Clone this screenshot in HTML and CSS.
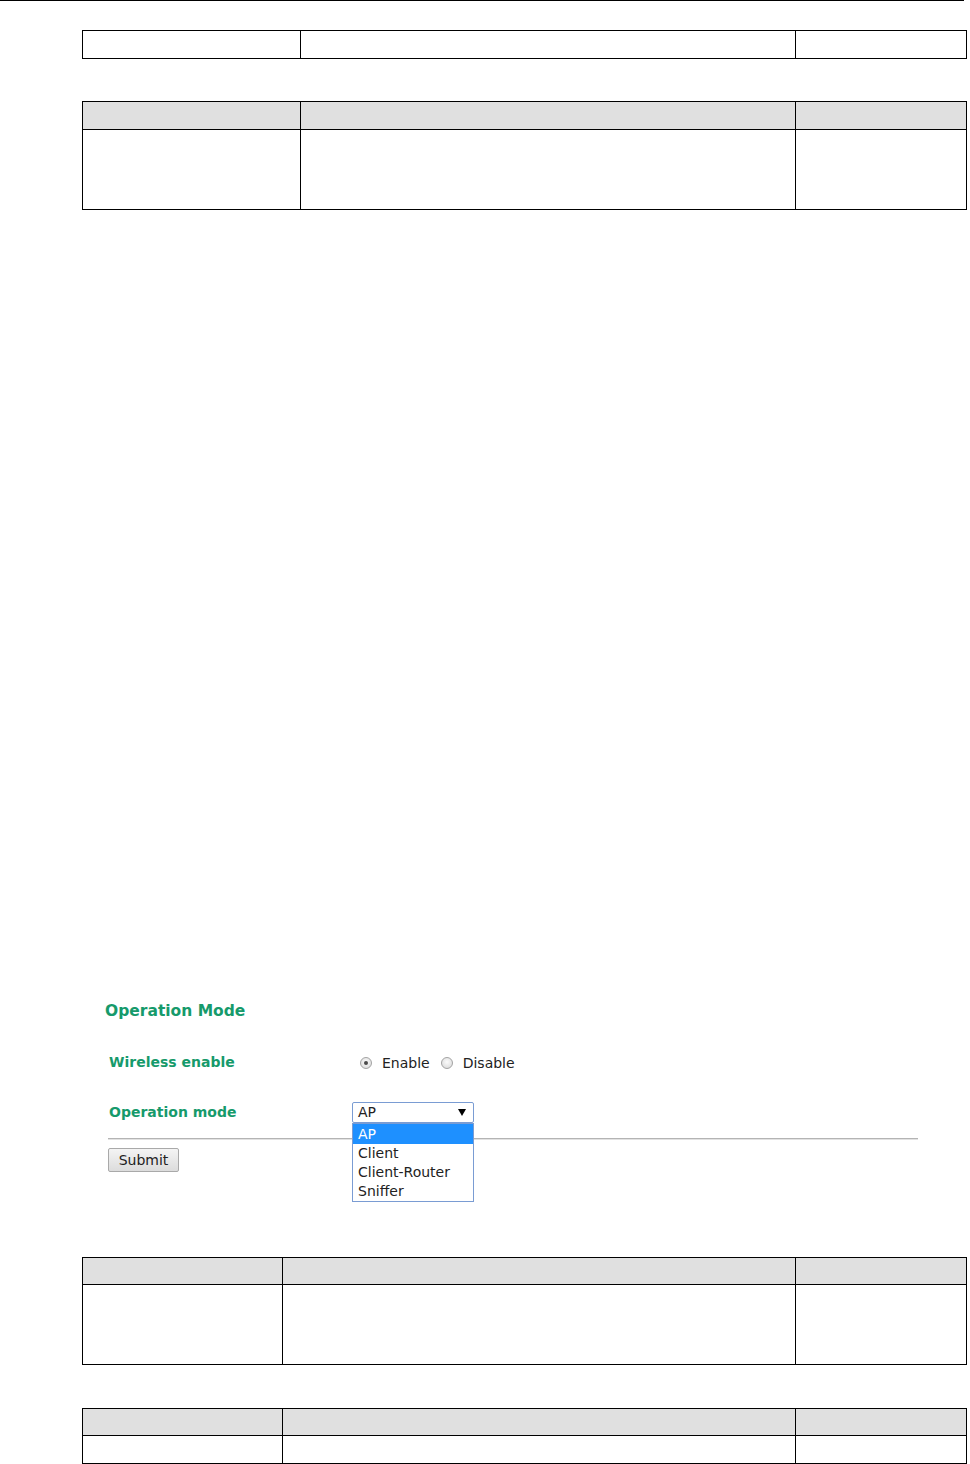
FILE: index.html
```html
<!DOCTYPE html>
<html>
<head>
    <title>Operation Mode</title>
    <link rel="stylesheet" href="styles.css">
</head>
<body>
    <div class="top-rule"></div>
    <div class="page">
        <div class="spec wide first">
            <div class="cell row-single"></div>
            <div class="cell row-single"></div>
            <div class="cell row-single"></div>
        </div>

        <div class="spec wide second">
            <div class="cell head"></div>
            <div class="cell head"></div>
            <div class="cell head"></div>
            <div class="cell row-tall"></div>
            <div class="cell row-tall"></div>
            <div class="cell row-tall"></div>
        </div>

        <!-- screenshot of the web console form -->
        <div class="shot">
            <h3 class="shot-title">Operation Mode</h3>
            <div class="field-row first-row">
                <div class="field-label">Wireless enable</div>
                <div class="field-value radios">
                    <span class="radio checked"></span>
                    <span class="radio-text">Enable</span>
                    <span class="radio"></span>
                    <span class="radio-text">Disable</span>
                </div>
            </div>
            <div class="field-row">
                <div class="field-label">Operation mode</div>
                <div class="field-value">
                    <div class="select">
                        <span class="select-text">AP</span>
                        <span class="select-arrow"></span>
                        <ul class="options">
                            <li class="selected">AP</li>
                            <li>Client</li>
                            <li>Client-Router</li>
                            <li>Sniffer</li>
                        </ul>
                    </div>
                </div>
            </div>
            <div class="divider"></div>
            <button class="submit" type="button">Submit</button>
        </div>

        <div class="spec narrow third">
            <div class="cell head"></div>
            <div class="cell head"></div>
            <div class="cell head"></div>
            <div class="cell row-tall"></div>
            <div class="cell row-tall"></div>
            <div class="cell row-tall"></div>
        </div>

        <div class="spec narrow fourth">
            <div class="cell head"></div>
            <div class="cell head"></div>
            <div class="cell head"></div>
            <div class="cell row-single"></div>
            <div class="cell row-single"></div>
            <div class="cell row-single"></div>
        </div>
    </div>
</body>
</html>
```

FILE: styles.css
```css
body {
    margin: 0;
    background: #fff;
    color: #222;
    font-family: "DejaVu Sans", Verdana, sans-serif;
    font-size: 14px;
}
.top-rule {
    width: 964px;
    height: 1px;
    background: #000;
}
.page {
    padding-left: 82px;
}

/* document tables */
.spec {
    display: grid;
    width: 884px;
    border-top: 1px solid #000;
    border-left: 1px solid #000;
}
.spec.wide {
    grid-template-columns: 218px 495px 171px;
}
.spec.narrow {
    grid-template-columns: 200px 513px 171px;
}
.cell {
    border-right: 1px solid #000;
    border-bottom: 1px solid #000;
}
.cell.head {
    height: 27px;
    background: #e0e0e0;
}
.cell.row-single {
    height: 27px;
}
.cell.row-tall {
    height: 79px;
}
.first {
    margin-top: 29px;
}
.second {
    margin-top: 42px;
}
.third {
    margin-top: 85px;
}
.third .cell.head {
    height: 26px;
}
.fourth {
    margin-top: 43px;
}
.fourth .cell.head {
    height: 26px;
}

/* form screenshot */
.shot {
    margin-top: 793px;
    width: 836px;
}
.shot-title {
    margin: 0 0 0 23px;
    font-size: 15.5px;
    line-height: 16px;
    font-weight: bold;
    color: #169a6b;
}
.field-row {
    display: flex;
    align-items: center;
    height: 24px;
    margin-top: 26px;
    padding-left: 27px;
}
.field-row.first-row {
    margin-top: 31px;
}
.field-label {
    width: 243px;
    font-weight: bold;
    color: #169a6b;
}
.field-value {
    display: flex;
    align-items: center;
}
.radios {
    padding-left: 8px;
    padding-top: 2px;
}
.radio {
    width: 10px;
    height: 10px;
    border: 1px solid #a3a3a3;
    border-radius: 50%;
    background: radial-gradient(circle at 50% 40%, #fbfbfb, #d6d6d6);
    display: flex;
    align-items: center;
    justify-content: center;
}
.radio.checked::after {
    content: "";
    width: 4px;
    height: 4px;
    border-radius: 50%;
    background: #4a4a4a;
}
.radio-text {
    margin: 0 11px 0 10px;
}
.select {
    position: relative;
    height: 19px;
    border: 1px solid #7a9cd3;
    border-radius: 2px;
    display: flex;
    align-items: center;
    justify-content: space-between;
    padding: 0 7px 0 5px;
    box-sizing: content-box;
    width: 108px;
}
.select-arrow {
    width: 0;
    height: 0;
    border-left: 4px solid transparent;
    border-right: 4px solid transparent;
    border-top: 7px solid #000;
}
.options {
    position: absolute;
    top: 20px;
    left: -1px;
    width: 120px;
    margin: 0;
    padding: 0;
    list-style: none;
    background: #fff;
    border: 1px solid #7a9cd3;
}
.options li {
    height: 19px;
    line-height: 19px;
    padding-left: 5px;
}
.options li.selected {
    height: 20px;
    line-height: 20px;
    background: #1e90ff;
    color: #fff;
}
.divider {
    margin: 14px 0 0 26px;
    width: 810px;
    border-top: 1px solid #b4b4b4;
    border-bottom: 1px solid #e2e2e2;
}
.submit {
    display: block;
    margin: 8px 0 0 26px;
    width: 71px;
    height: 24px;
    padding: 0;
    font-family: "DejaVu Sans", Verdana, sans-serif;
    font-size: 14px;
    color: #222;
    border: 1px solid #a9a9a9;
    border-radius: 2px;
    background: linear-gradient(#f4f4f4, #dcdcdc);
}
```
